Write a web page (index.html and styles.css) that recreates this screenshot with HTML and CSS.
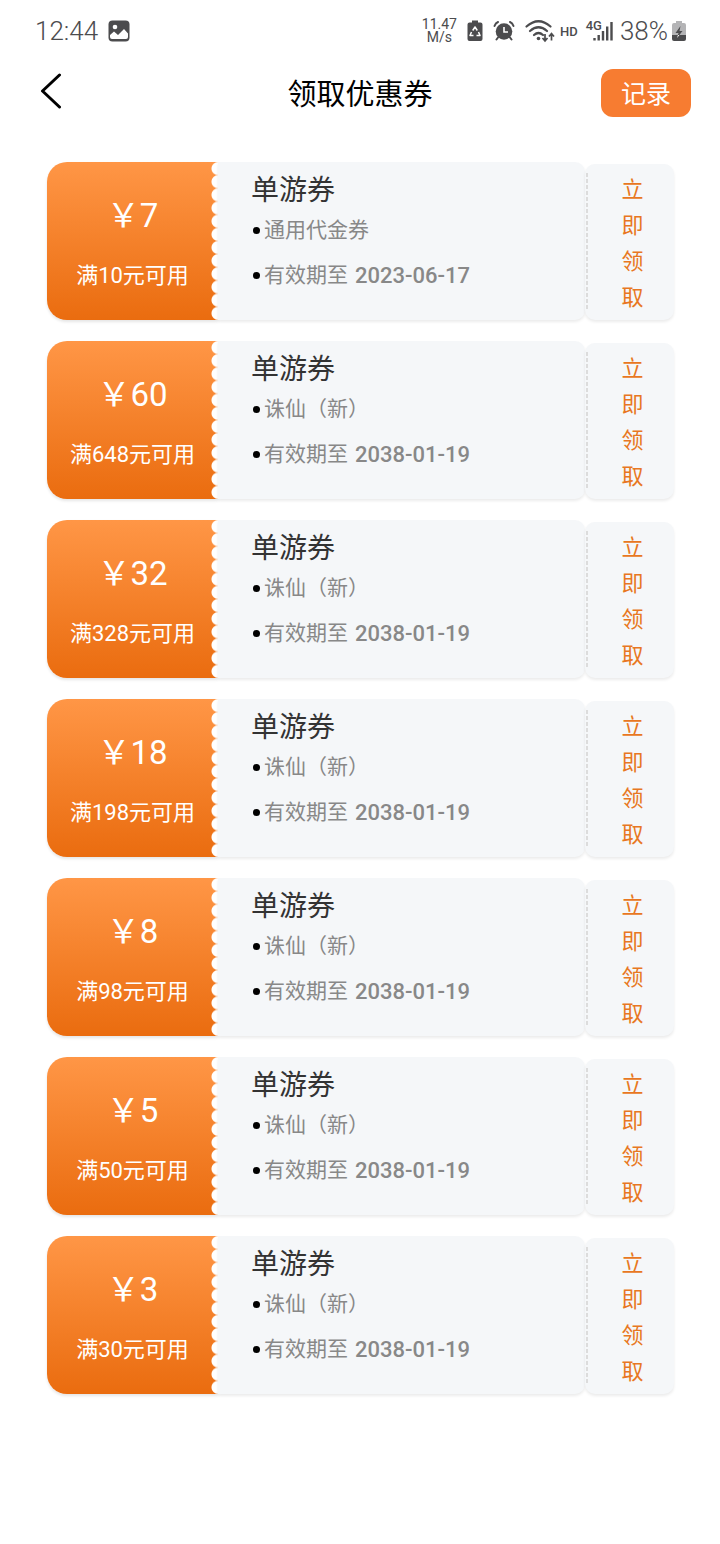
FILE: index.html
```html
<!DOCTYPE html>
<html lang="zh-CN">
<head>
  <meta charset="UTF-8" />
  <meta name="viewport" content="width=device-width, initial-scale=1.0"/>
  <title>领取优惠券</title>
  <link rel="stylesheet" href="styles.css">
</head>
<body>

  <!-- Status bar -->
  <div class="status-bar">
    <div class="status-left">
      <span class="clock">12:44</span>
      <svg width="22" height="22" viewBox="0 0 22 22">
        <rect x="0.5" y="0.5" width="21" height="21" rx="4" fill="#4c4c4e"/>
        <circle cx="7" cy="7" r="2.3" fill="#fff"/>
        <path d="M2 15l4-3.500 4 3.500 6-6 4 4.500v3.500q0 2-2 2H4q-2 0-2-2z" fill="#fff"/>
      </svg>
    </div>
    <div class="status-right">
      <div class="speed"><span>11.47</span><span>M/s</span></div>
      <svg width="16" height="22" viewBox="0 0 16 22">
        <path d="M5 .5h6v2h2.500q2 0 2 2V19q0 2-2 2h-11q-2 0-2-2V4.500q0-2 2-2H5z" fill="#4c4c4e"/>
        <path d="M5.700 10.500L8 7l2.300 3.500M11.500 12l1.500 3.500h-3.500M6.500 15.500H3l1.500-3.500" fill="none" stroke="#fff" stroke-width="1.500" stroke-linejoin="round"/>
      </svg>
      <svg width="22" height="20" viewBox="0 0 22 20">
        <circle cx="11" cy="10.500" r="8.300" fill="#4c4c4e"/>
        <path d="M1.500 5q1-3 3.500-4M20.500 5q-1-3-3.500-4M5 16.500l-1.500 2M17 16.500l1.500 2" fill="none" stroke="#4c4c4e" stroke-width="2" stroke-linecap="round"/>
        <path d="M11 6v5h4" fill="none" stroke="#fff" stroke-width="1.600"/>
      </svg>
      <svg width="30" height="24" viewBox="0 0 30 24">
        <path d="M1.500 7.500q12-10.500 24 0M5 12q8.500-7.500 17 0M9 16q4.500-4 9 0" fill="none" stroke="#4c4c4e" stroke-width="2.200" stroke-linecap="round"/>
        <circle cx="13.500" cy="19.500" r="1.800" fill="#4c4c4e"/>
        <path d="M20 15v7M17.500 19l2.500 3 2.500-3M26.500 21.500v-7M24 17.500l2.500-3 2.500 3" fill="none" stroke="#4c4c4e" stroke-width="1.700"/>
      </svg>
      <span class="hd">HD</span>
      <div class="signal">
        <span class="net">4G</span>
        <svg width="20" height="20" viewBox="0 0 20 20">
          <path d="M1.500 17v2.500M5.700 14v5.500M10 10v9.500M14.200 5.500v14M18.500 1v18.500" stroke="#4c4c4e" stroke-width="2.400"/>
        </svg>
      </div>
      <span class="percent">38%</span>
      <svg width="14" height="22" viewBox="0 0 14 22">
        <path d="M4 1h6v2h2q2 0 2 2v10H0V5q0-2 2-2h2z" fill="#b4b4b6"/>
        <path d="M0 15h14v4q0 2-2 2H2q-2 0-2-2z" fill="#4c4c4e"/>
        <path d="M8.500 6L3.500 13h3L5 18l5.500-7H7.500z" fill="#4c4c4e"/>
        <path d="M6 15l-1 3 2.400-3z" fill="#fff"/>
      </svg>
    </div>
  </div>

  <!-- Title bar -->
  <header class="nav">
    <button class="back" aria-label="返回">
      <svg width="22" height="36" viewBox="0 0 22 36">
        <path d="M19.500 2L2.500 18l17 16" fill="none" stroke="#000" stroke-width="3" stroke-linecap="round" stroke-linejoin="round"/>
      </svg>
    </button>
    <h1 class="nav-title">领取优惠券</h1>
    <button class="record">记录</button>
  </header>

  <!-- Coupons -->
  <main class="coupons" id="coupons"></main>

  <script>
    const coupons = [
      { price: 7, min: 10, game: '通用代金券', date: '2023-06-17' },
      { price: 60, min: 648, game: '诛仙（新）', date: '2038-01-19' },
      { price: 32, min: 328, game: '诛仙（新）', date: '2038-01-19' },
      { price: 18, min: 198, game: '诛仙（新）', date: '2038-01-19' },
      { price: 8, min: 98, game: '诛仙（新）', date: '2038-01-19' },
      { price: 5, min: 50, game: '诛仙（新）', date: '2038-01-19' },
      { price: 3, min: 30, game: '诛仙（新）', date: '2038-01-19' }
    ];

    const list = document.getElementById('coupons');

    coupons.forEach(c => {
      const item = document.createElement('section');
      item.className = 'coupon';
      item.innerHTML = `
        <div class="coupon-price">
          <div class="price">￥${c.price}</div>
          <div class="condition">满${c.min}元可用</div>
        </div>
        <div class="coupon-info">
          <h2 class="coupon-name">单游券</h2>
          <ul class="details">
            <li>${c.game}</li>
            <li>有效期至 <b>${c.date}</b></li>
          </ul>
        </div>
        <button class="claim"><span>立即领取</span></button>`;
      list.appendChild(item);
    });
  </script>
</body>
</html>
```
FILE: styles.css
```css
* {
  box-sizing: border-box;
}

body {
  margin: 0;
  background: #fff;
  font-family: Roboto, "Noto Sans CJK SC", sans-serif;
  font-weight: 400;
  color: #333;
}

button {
  border: none;
  padding: 0;
  background: none;
  font-family: inherit;
  cursor: pointer;
}

svg {
  display: block;
  flex: none;
}

/* Status bar */
.status-bar {
  display: flex;
  justify-content: space-between;
  align-items: center;
  height: 62px;
  padding: 0 34px 0 35px;
  color: #4c4c4e;
}

.status-left,
.status-right {
  display: flex;
  align-items: center;
  gap: 10px;
}

.clock,
.percent {
  font-size: 26px;
  font-weight: 300;
}

.percent {
  margin: 0 -6px 0 -3px;
}

.speed {
  display: flex;
  flex-direction: column;
  align-items: center;
  font-size: 14px;
  line-height: 13px;
}

.hd {
  font-size: 13px;
  font-weight: 500;
  margin-left: -5px;
}

.signal {
  display: flex;
  align-items: flex-end;
}

.net {
  font-size: 13px;
  font-weight: 500;
  line-height: 10px;
  align-self: flex-start;
  margin: 0 -9px 0 -2px;
}

/* Title bar */
.nav {
  display: grid;
  grid-template-columns: 1fr auto 1fr;
  align-items: center;
  height: 62px;
  padding: 0 29px;
}

.back {
  justify-self: start;
  margin: 0 0 4px 11px;
}

.nav-title {
  margin: 0 0 3px;
  font-size: 29px;
  font-weight: 400;
  color: #000;
}

.record {
  justify-self: end;
  padding: 3px 20px 0;
  font-size: 25px;
  line-height: 45px;
  color: #fff;
  background: #f77c31;
  border-radius: 12px;
}

/* Coupons */
.coupons {
  display: flex;
  flex-direction: column;
  gap: 21px;
  padding: 38px 46px 40px 47px;
}

.coupon {
  display: flex;
}

/* perforated right edge */
.coupon-price {
  width: 171px;
  padding-top: 24px;
  text-align: center;
  color: #fff;
  background:
    radial-gradient(circle at right, #fff 6px, transparent 7px) right top / 7px 13px no-repeat round,
    linear-gradient(#ff9646, #ea6c0f);
  border-radius: 20px 0 0 20px;
  box-shadow: 0 2px 3px rgba(0, 0, 0, 0.1);
}

.price {
  font-size: 33px;
  line-height: 60px;
}

.condition {
  font-size: 22px;
  line-height: 60px;
}

.coupon-info {
  flex: 1;
  padding: 11px 0 22px 33px;
  background: #f5f7f9;
  border-radius: 0 10px 10px 0;
  box-shadow: 0 2px 3px rgba(0, 0, 0, 0.08);
}

.coupon-name {
  margin: 0;
  font-size: 28px;
  line-height: 35px;
  font-weight: 400;
}

.details {
  margin: 0;
  padding: 0;
  list-style: none;
  font-size: 21px;
  line-height: 45px;
  color: #888;
}

.details li {
  display: flex;
  align-items: center;
  gap: 4px;
}

.details li::before {
  content: "";
  width: 7px;
  height: 7px;
  margin-left: 2px;
  border-radius: 50%;
  background: #000;
}

.details b {
  margin-left: 3px;
  font-size: 22px;
  font-weight: 500;
}

.claim {
  display: flex;
  justify-content: center;
  align-items: center;
  width: 89px;
  margin-top: 2px;
  padding: 3px 0 0 6px;
  font-size: 22px;
  line-height: 36px;
  color: #e87722;
  background:
    repeating-linear-gradient(#dcdcdc 0 4px, transparent 4px 6px) 1px center / 2px 138px no-repeat,
    #f5f7f9;
  border-radius: 10px;
  box-shadow: 0 2px 3px rgba(0, 0, 0, 0.08);
}

.claim span {
  width: 22px;
  word-break: break-all;
}
```
